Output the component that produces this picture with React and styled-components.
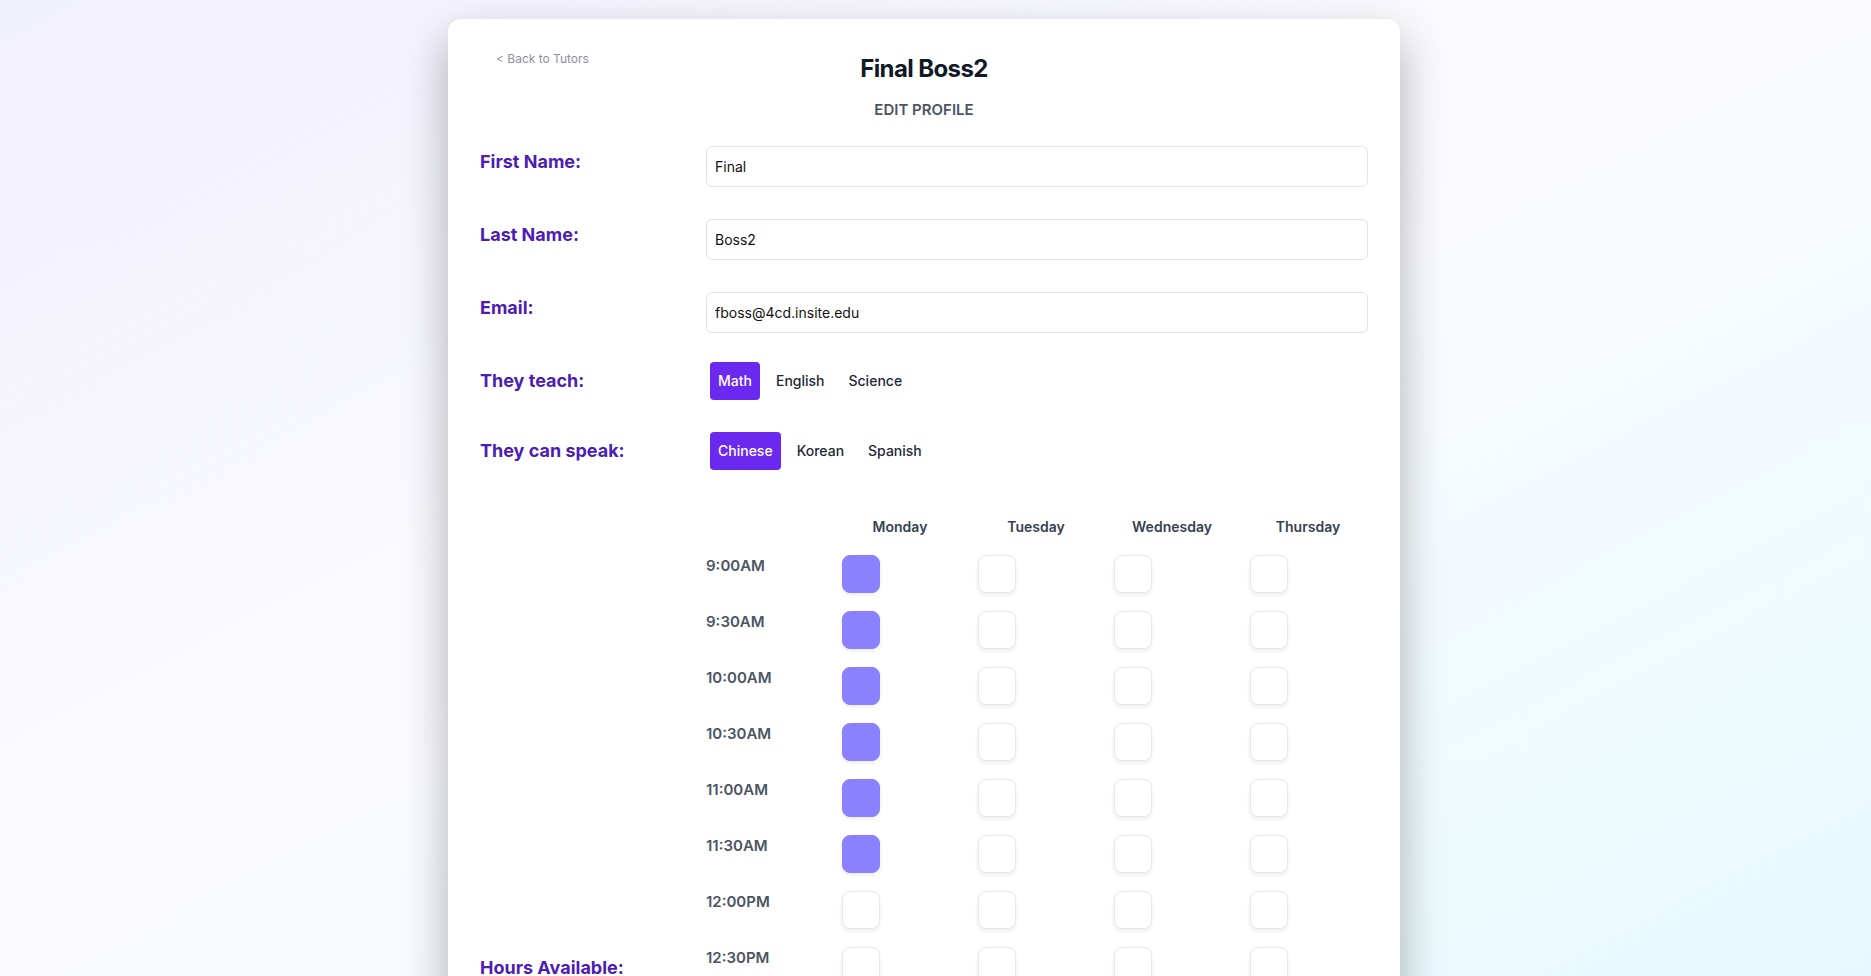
import React from 'react';
import styled, { createGlobalStyle } from 'styled-components';

const subjects = ['Math', 'English', 'Science'];
const languages = ['Chinese', 'Korean', 'Spanish'];
const days = ['Monday', 'Tuesday', 'Wednesday', 'Thursday'];

// half hour slots from 9:00AM to 4:30PM
const times = [];
for (let h = 9; h < 17; h++) {
  const hour = h > 12 ? h - 12 : h;
  const ampm = h >= 12 ? 'PM' : 'AM';
  times.push(`${hour}:00${ampm}`);
  times.push(`${hour}:30${ampm}`);
}

const picked = { Monday: ['9:00AM', '9:30AM', '10:00AM', '10:30AM', '11:00AM', '11:30AM'] };

export default function App() {
  return (
    <Page>
      <GlobalStyle />
      <Card>
        <Header>
          <BackLink href="#">&lt; Back to Tutors</BackLink>
          <Title>Final Boss2</Title>
          <span />
        </Header>
        <Subtitle>EDIT PROFILE</Subtitle>

        <Form>
          <Row>
            <Label $offset={2}>First Name:</Label>
            <Input defaultValue="Final" />
          </Row>
          <Row $mt={32}>
            <Label $offset={2}>Last Name:</Label>
            <Input defaultValue="Boss2" />
          </Row>
          <Row $mt={32}>
            <Label $offset={2}>Email:</Label>
            <Input defaultValue="fboss@4cd.insite.edu" />
          </Row>
          <Row $mt={29} $align="center">
            <Label>They teach:</Label>
            <ChipGroup>
              {subjects.map((s) => (
                <Chip key={s} $on={s === 'Math'}>{s}</Chip>
              ))}
            </ChipGroup>
          </Row>
          <Row $mt={32} $align="center">
            <Label>They can speak:</Label>
            <ChipGroup>
              {languages.map((l) => (
                <Chip key={l} $on={l === 'Chinese'}>{l}</Chip>
              ))}
            </ChipGroup>
          </Row>
          <Row $mt={32} $align="center">
            <Label>Hours Available:</Label>
            <Schedule>
              <span />
              {days.map((d) => (
                <DayHead key={d}>{d}</DayHead>
              ))}
              {times.map((t) => (
                <React.Fragment key={t}>
                  <Time>{t}</Time>
                  {days.map((d) => (
                    <Cell key={d}>
                      <Slot $on={(picked[d] || []).includes(t)} />
                    </Cell>
                  ))}
                </React.Fragment>
              ))}
            </Schedule>
          </Row>
        </Form>
      </Card>
    </Page>
  );
}

const GlobalStyle = createGlobalStyle`
  html, body {
    margin: 0;
    padding: 0;
  }
  body {
    font-family: Inter, "Noto Sans", sans-serif;
    -webkit-font-smoothing: antialiased;
  }
`;

const Page = styled.div`
  height: 100vh;
  overflow: hidden;
  box-sizing: border-box;
  display: flex;
  justify-content: center;
  align-items: flex-start;
  padding: 19px 23px 0 0;
  background: linear-gradient(to bottom right, #f1f0fd 0%, #fbfbfe 50%, #e6fafe 100%);
`;

const Card = styled.div`
  width: 952px;
  box-sizing: border-box;
  background: #fff;
  border-radius: 13px;
  padding: 32px;
  box-shadow: 0 20px 45px rgba(0, 0, 0, 0.3);
`;

const Header = styled.div`
  display: grid;
  grid-template-columns: 1fr auto 1fr;
  align-items: start;
`;

const BackLink = styled.a`
  padding-left: 16px;
  font-size: 12px;
  line-height: 16px;
  color: #8b8fa1;
  text-decoration: none;
`;

const Title = styled.h1`
  margin: 2px 0 0;
  font-size: 24px;
  line-height: 32px;
  font-weight: 700;
  letter-spacing: -0.025em;
  color: #111827;
`;

const Subtitle = styled.div`
  margin-top: 15px;
  text-align: center;
  font-size: 15px;
  line-height: 20px;
  font-weight: 600;
  color: #4b5563;
`;

const Form = styled.div`
  margin-top: 26px;
  display: flex;
  flex-direction: column;
`;

const Row = styled.div`
  margin-top: ${(p) => p.$mt || 0}px;
  display: grid;
  grid-template-columns: 210px 1fr;
  column-gap: 16px;
  align-items: ${(p) => p.$align || 'start'};
`;

const Label = styled.div`
  padding-top: ${(p) => p.$offset || 0}px;
  font-size: 18px;
  line-height: 28px;
  font-weight: 700;
  color: #4c1db5;
`;

const Input = styled.input`
  height: 41px;
  box-sizing: border-box;
  padding: 0 8px;
  border: 1px solid #e3e4ea;
  border-radius: 6px;
  font-family: Inter, "Noto Sans", sans-serif;
  font-size: 14px;
  color: #111;
  outline: none;
`;

const ChipGroup = styled.div`
  display: flex;
  gap: 8px;
  padding-left: 4px;
`;

const Chip = styled.button`
  padding: 9px 8px;
  border: none;
  border-radius: 4px;
  font-family: Inter, "Noto Sans", sans-serif;
  font-size: 14px;
  line-height: 20px;
  font-weight: 500;
  background: ${(p) => (p.$on ? '#6b28ef' : 'transparent')};
  color: ${(p) => (p.$on ? '#fff' : '#1f2937')};
`;

const Schedule = styled.div`
  display: grid;
  grid-template-columns: 126px repeat(4, 136px);
  row-gap: 18px;
`;

const DayHead = styled.div`
  height: 35px;
  display: flex;
  align-items: flex-end;
  justify-content: center;
  font-size: 14px;
  line-height: 20px;
  font-weight: 600;
  color: #374151;
`;

const Time = styled.div`
  font-size: 15px;
  line-height: 22px;
  font-weight: 600;
  color: #4b5563;
`;

const Cell = styled.div`
  padding-left: 10px;
`;

const Slot = styled.div`
  width: 38px;
  height: 38px;
  box-sizing: border-box;
  border-radius: 8px;
  background: ${(p) => (p.$on ? '#8b80fd' : '#fff')};
  border: 1px solid ${(p) => (p.$on ? '#8b80fd' : '#e6e7eb')};
  box-shadow: 0 2px 4px rgba(0, 0, 0, 0.08);
`;
